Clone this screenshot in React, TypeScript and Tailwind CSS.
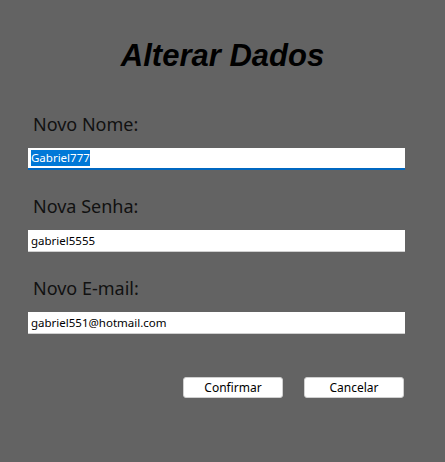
import React from 'react';

const Field: React.FC<{ label: string; value: string; focused?: boolean }> = ({ label, value, focused }) => (
  <div className="flex flex-col">
    <label className="pl-[5px] text-[18px] leading-[24px] text-[#111111]">{label}</label>
    <div
      className={`mt-[12px] h-[22px] w-[377px] bg-white flex items-center pl-[3px] text-[11.5px] text-black ${
        focused ? 'border-b-2 border-[#0067c0]' : 'border-b border-[#cfcfcf]'
      }`}
    >
      {focused ? <span className="bg-[#0078d7] text-white leading-[16px]">{value}</span> : <span>{value}</span>}
    </div>
  </div>
);

export default function App() {
  return (
    <div
      className="w-[445px] h-[462px] bg-[#636363] flex flex-col"
      style={{ fontFamily: '"Noto Sans", "Open Sans", sans-serif' }}
    >
      <h1
        className="mt-[38px] text-center text-[31px] leading-[36px] font-bold italic text-black"
        style={{ fontFamily: '"Liberation Sans", Arial, sans-serif' }}
      >
        Alterar Dados
      </h1>

      <div className="mt-[38px] ml-[28px] flex flex-col gap-[24px]">
        <Field label="Novo Nome:" value="Gabriel777" focused />
        <Field label="Nova Senha:" value="gabriel5555" />
        <Field label="Novo E-mail:" value="gabriel551@hotmail.com" />
      </div>

      <div className="mt-[43px] ml-[183px] flex gap-[21px]">
        <button className="h-[21px] w-[100px] rounded-[3px] bg-white border border-[#d0d0d0] text-[12px] text-black">
          Confirmar
        </button>
        <button className="h-[21px] w-[100px] rounded-[3px] bg-white border border-[#d0d0d0] text-[12px] text-black">
          Cancelar
        </button>
      </div>
    </div>
  );
}
